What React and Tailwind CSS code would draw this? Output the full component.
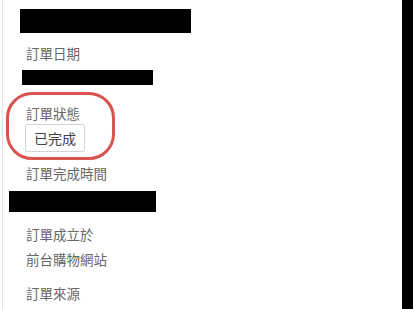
import React from "react";

const font = { fontFamily: '"Noto Sans CJK TC", "Noto Sans", sans-serif' };

function Label({ children, className = "" }) {
  return (
    <div className={`h-[18px] text-[13.5px] leading-[18px] text-[#666] ml-[23px] ${className}`}>
      {children}
    </div>
  );
}

export default function App() {
  return (
    <div className="w-[413px] h-[309px] bg-white flex overflow-hidden" style={font}>
      <div className="ml-[2px] w-px h-full bg-[#e4e4e4]" />
      <div className="relative flex-1 flex flex-col pt-[9px]">
        <div className="ml-[17px] w-[171px] h-[24px] bg-black" />
        <Label className="mt-[11px]">訂單日期</Label>
        <div className="mt-[8px] ml-[19px] w-[131px] h-[15px] bg-black" />
        <Label className="mt-[19px]">訂單狀態</Label>
        <div className="mt-[2px] ml-[22px] w-[60px] h-[28px] border border-[#d4d4d4] rounded-[2px] flex items-center justify-center text-[14px] text-[#444]">
          已完成
        </div>
        <Label className="mt-[12px]">訂單完成時間</Label>
        <div className="mt-[9px] ml-[6px] w-[147px] h-[21px] bg-black" />
        <Label className="mt-[13px]">訂單成立於</Label>
        <Label className="mt-[7px]">前台購物網站</Label>
        <Label className="mt-[16px]">訂單來源</Label>
        <div className="absolute left-[3px] top-[92px] w-[109px] h-[68px] border-[3px] border-[#d9534f] rounded-[26px] pointer-events-none" />
      </div>
      <div className="w-[11px] h-full bg-black" />
    </div>
  );
}
